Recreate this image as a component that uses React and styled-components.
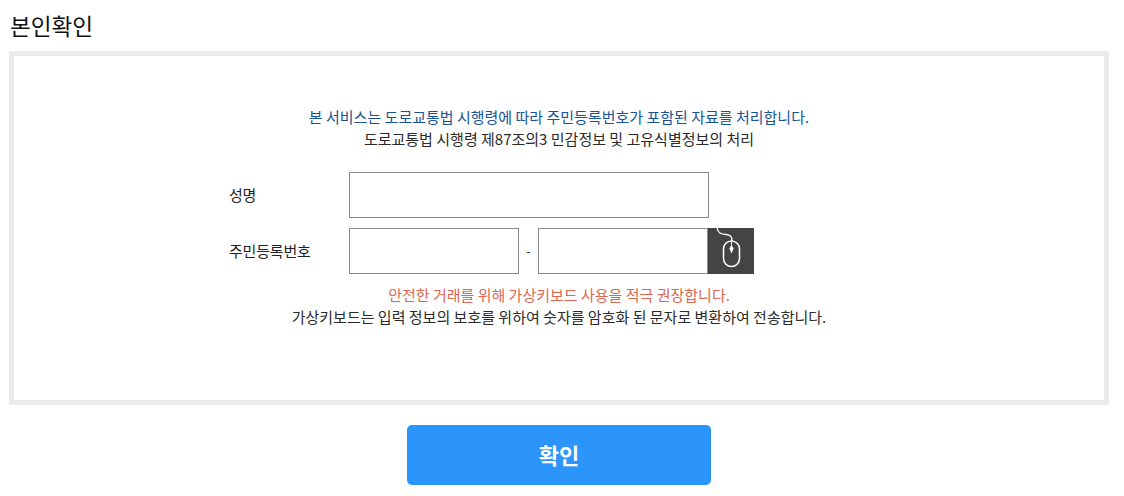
import styled, { createGlobalStyle } from 'styled-components';
import React from 'react';

const GlobalStyle = createGlobalStyle`
  body {
    margin: 0;
    background: #fff;
    font-family: "Noto Sans CJK KR", "Noto Sans", sans-serif;
    color: #222;
  }
`;

const Page = styled.div`
  width: 1100px;
  padding: 11px 15px 11px 9px;
`;

const Title = styled.h2`
  margin: 0 0 11px 1px;
  font-size: 22.6px;
  font-weight: 400;
  line-height: 29px;
  color: #111;
`;

const Panel = styled.div`
  box-sizing: border-box;
  height: 354px;
  border: 5px solid #ebebeb;
  padding-top: 50px;
  display: flex;
  flex-direction: column;
  align-items: center;
`;

const Notice = styled.p`
  margin: 0;
  font-size: 15px;
  line-height: 22px;
  letter-spacing: 0;
  text-align: center;
  color: ${(p) => p.$color || '#2a2a2a'};
`;

const Form = styled.div`
  width: 660px;
  margin: 22px 0 10px;
  display: flex;
  flex-direction: column;
  gap: 10px;
`;

const Row = styled.div`
  display: flex;
  align-items: center;
`;

const Label = styled.label`
  width: 120px;
  padding-bottom: 2px;
  font-size: 15px;
  letter-spacing: -0.2px;
  color: #222;
`;

const Input = styled.input`
  box-sizing: border-box;
  width: ${(p) => p.$width}px;
  height: 46px;
  border: 1px solid #8a8a8a;
  border-radius: 0;
  padding: 0 10px;
  background: #fff;
  &:focus {
    outline: none;
  }
`;

const Dash = styled.span`
  width: 19px;
  padding-bottom: 2px;
  text-align: center;
  font-size: 14px;
  color: #444;
`;

const MouseButton = styled.button`
  width: 46px;
  height: 46px;
  padding: 0;
  border: none;
  background: #444;
  display: flex;
  cursor: pointer;
`;

const ButtonRow = styled.div`
  display: flex;
  justify-content: center;
  margin-top: 20px;
`;

const Submit = styled.button`
  width: 304px;
  height: 60px;
  padding: 0 0 2px;
  border: none;
  border-radius: 5px;
  background: #2b95fb;
  color: #fff;
  font-family: inherit;
  font-size: 22px;
  font-weight: 700;
  cursor: pointer;
`;

function MouseIcon() {
  return (
    <svg width="46" height="46" viewBox="0 0 46 46" fill="none" stroke="#fff">
      <path d="M9 0c1 5 4 6 9 6.500c4 .5 6 1.500 6 6.500" strokeWidth="1.300" />
      <rect x="15.500" y="13" width="16" height="25.500" rx="8" strokeWidth="1.500" />
      <path d="M23.500 14v11" strokeWidth="1" />
      <path d="M23.500 17.500l1.800 3-1.800 4-1.800-4z" fill="#fff" strokeWidth=".6" />
    </svg>
  );
}

function App() {
  return (
    <Page>
      <GlobalStyle />
      <Title>본인확인</Title>
      <Panel>
        <Notice $color="#1a5296">본 서비스는 도로교통법 시행령에 따라 주민등록번호가 포함된 자료를 처리합니다.</Notice>
        <Notice>도로교통법 시행령 제87조의3 민감정보 및 고유식별정보의 처리</Notice>
        <Form>
          <Row>
            <Label>성명</Label>
            <Input $width={360} />
          </Row>
          <Row>
            <Label>주민등록번호</Label>
            <Input $width={170} />
            <Dash>-</Dash>
            <Input $width={170} type="password" />
            <MouseButton type="button" aria-label="가상키보드">
              <MouseIcon />
            </MouseButton>
          </Row>
        </Form>
        <Notice $color="#dd6651">안전한 거래를 위해 가상키보드 사용을 적극 권장합니다.</Notice>
        <Notice>가상키보드는 입력 정보의 보호를 위하여 숫자를 암호화 된 문자로 변환하여 전송합니다.</Notice>
      </Panel>
      <ButtonRow>
        <Submit type="button">확인</Submit>
      </ButtonRow>
    </Page>
  );
}

export default App;
